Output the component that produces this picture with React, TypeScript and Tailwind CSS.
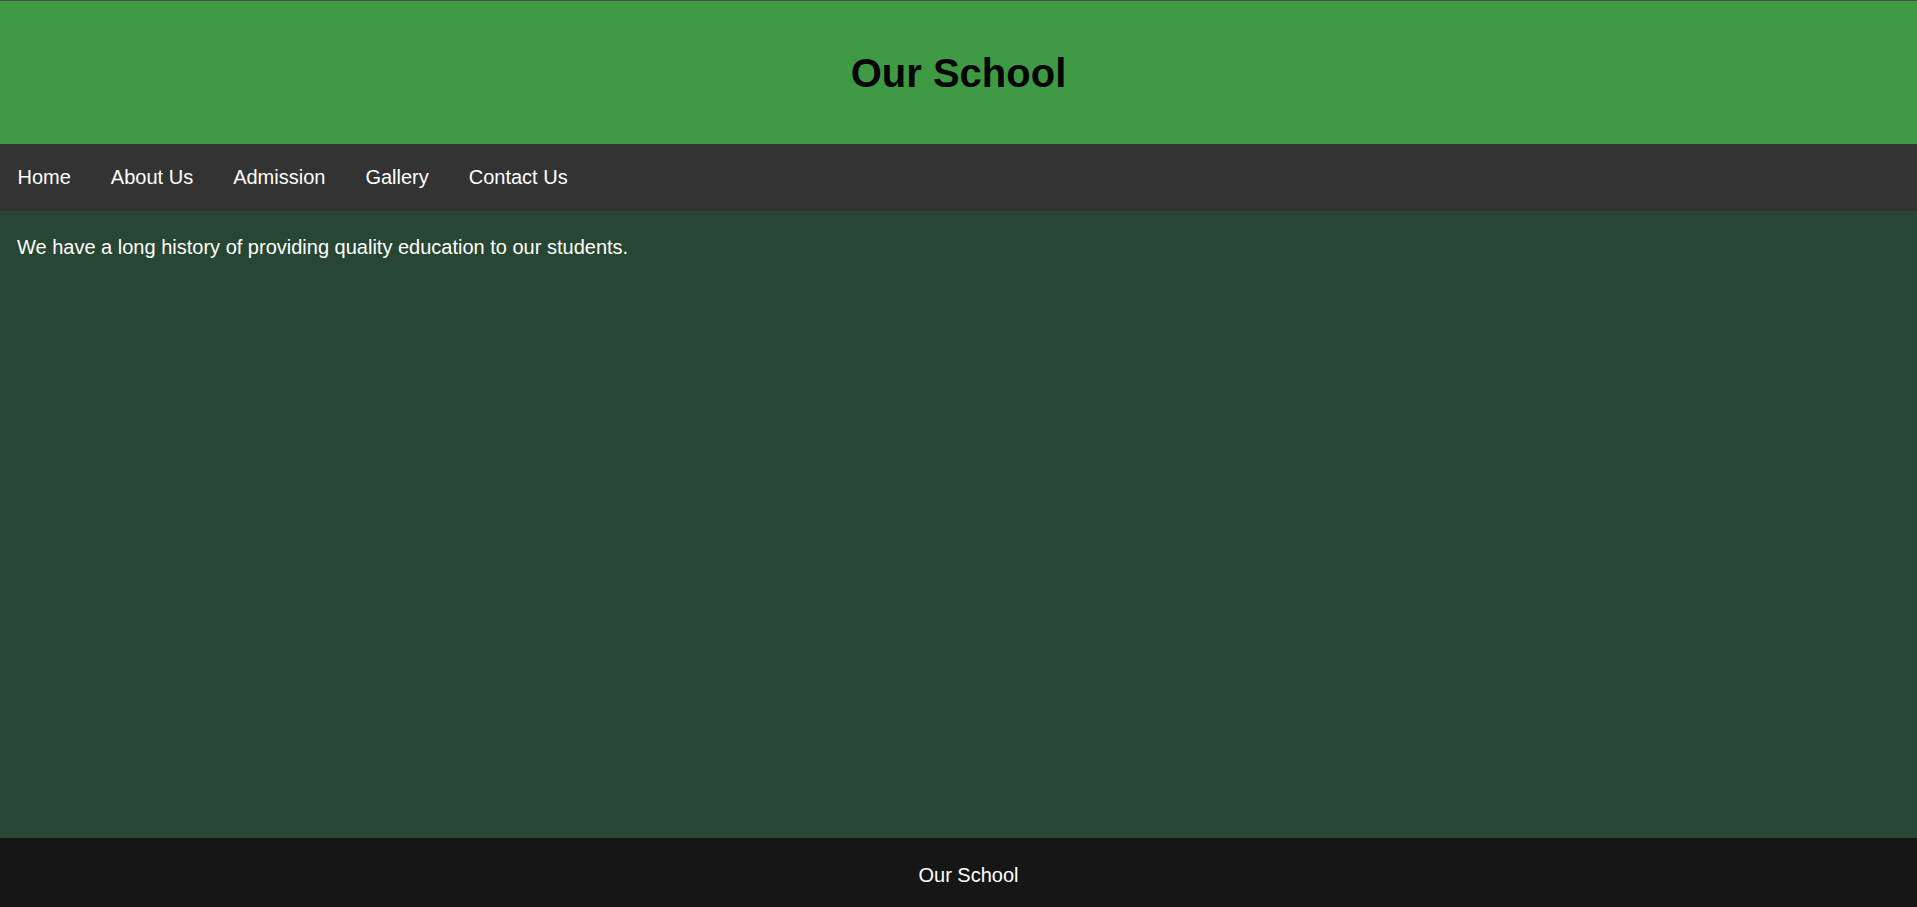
const links = ['Home', 'About Us', 'Admission', 'Gallery', 'Contact Us'];

export default function App() {
  return (
    <div className="flex min-h-screen flex-col font-['Liberation_Sans',Arial,sans-serif] text-[20px]">
      {/* Header */}
      <header className="flex h-[144px] items-center justify-center border-t border-[#4d4d4d] bg-[#3f9a44]">
        <h1 className="text-[40px] font-bold leading-[46px] text-[#050505]">Our School</h1>
      </header>

      {/* Navigation */}
      <nav className="flex h-[67px] items-center bg-[#333333] pb-[2px] pl-[17.5px]">
        <ul className="flex gap-[40px]">
          {links.map((link) => (
            <li key={link}>
              <a href="#" className="leading-[23px] text-white">
                {link}
              </a>
            </li>
          ))}
        </ul>
      </nav>

      {/* Content */}
      <main className="flex-1 bg-[#274634] pl-[17px] pt-[25px]">
        <p className="leading-[23px] text-white">
          We have a long history of providing quality education to our students.
        </p>
      </main>

      {/* Footer */}
      <footer className="h-[69px] bg-[#161616] pl-[20px] pt-[26px] text-center">
        <p className="leading-[23px] text-white">Our School</p>
      </footer>
    </div>
  );
}
